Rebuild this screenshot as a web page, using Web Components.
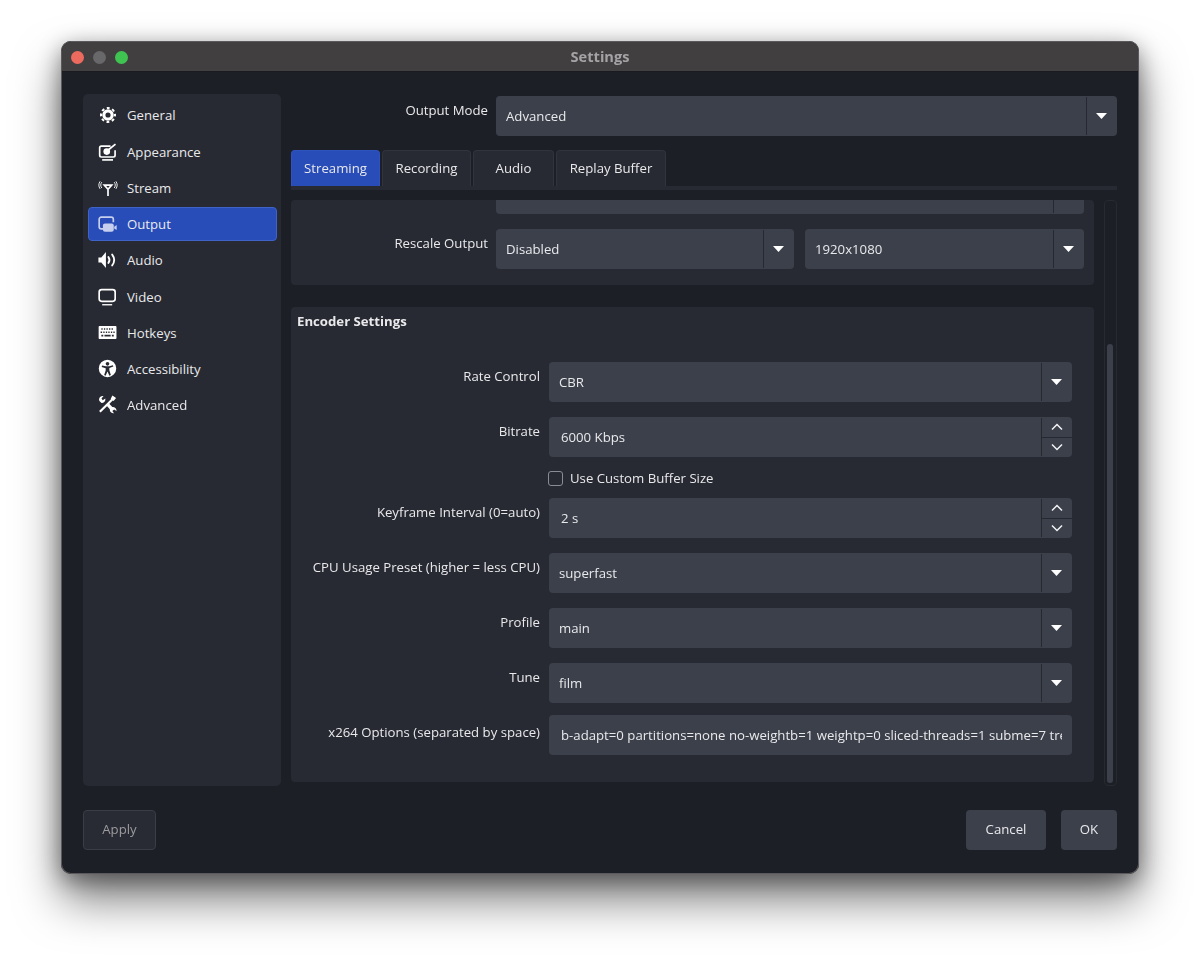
<!DOCTYPE html>
<html>
<head>
<meta charset="utf-8">
<title>Settings</title>
<style>
    html, body { margin: 0; background: #fff; }
    body { box-sizing: border-box; height: 955px; padding: 41px 0 0 61px; overflow: hidden; font-family: "Open Sans", sans-serif; font-size: 13.2px; color: #e9e9ec; }
</style>
</head>
<body>
<settings-window>
    <side-bar slot="side">
        <nav-item icon="general">General</nav-item>
        <nav-item icon="appearance">Appearance</nav-item>
        <nav-item icon="stream">Stream</nav-item>
        <nav-item icon="output" selected>Output</nav-item>
        <nav-item icon="audio">Audio</nav-item>
        <nav-item icon="video">Video</nav-item>
        <nav-item icon="hotkeys">Hotkeys</nav-item>
        <nav-item icon="accessibility">Accessibility</nav-item>
        <nav-item icon="advanced">Advanced</nav-item>
    </side-bar>

    <form-row slot="main" style="--label-width:197px;--mt:2px;--col-gap:8px">
        <span slot="label">Output Mode</span>
        <combo-box>Advanced</combo-box>
    </form-row>
    <tab-bar slot="main">
        <tab-item style="width:89px" active>Streaming</tab-item>
        <tab-item style="width:89px">Recording</tab-item>
        <tab-item style="width:81px">Audio</tab-item>
        <tab-item style="width:110px">Replay Buffer</tab-item>
    </tab-bar>
    <scroll-area slot="main">
        <group-panel style="--pad-bottom:16px">
            <form-row style="--label-width:191px;--mt:0;--col-gap:8px;height:14px">
                <combo-box cut style="--h:14px"></combo-box>
            </form-row>
            <form-row style="--label-width:191px;--col-gap:8px">
                <span slot="label">Rescale Output</span>
                <field-pair>
                    <combo-box style="width:298px">Disabled</combo-box>
                    <combo-box style="width:279px">1920x1080</combo-box>
                </field-pair>
            </form-row>
        </group-panel>
        <group-panel title="Encoder Settings" style="margin-top:22px;--pad-bottom:27px;--pad-right:22px">
            <form-row style="--mt:32px">
                <span slot="label">Rate Control</span>
                <combo-box>CBR</combo-box>
            </form-row>
            <form-row>
                <span slot="label">Bitrate</span>
                <spin-box>6000 Kbps</spin-box>
            </form-row>
            <form-row style="--mt:11px">
                <check-box>Use Custom Buffer Size</check-box>
            </form-row>
            <form-row style="--mt:10px">
                <span slot="label">Keyframe Interval (0=auto)</span>
                <spin-box>2 s</spin-box>
            </form-row>
            <form-row>
                <span slot="label">CPU Usage Preset (higher = less CPU)</span>
                <combo-box>superfast</combo-box>
            </form-row>
            <form-row>
                <span slot="label">Profile</span>
                <combo-box>main</combo-box>
            </form-row>
            <form-row>
                <span slot="label">Tune</span>
                <combo-box>film</combo-box>
            </form-row>
            <form-row style="--mt:12px;--label-top:8px">
                <span slot="label">x264 Options (separated by space)</span>
                <text-field>b-adapt=0 partitions=none no-weightb=1 weightp=0 sliced-threads=1 subme=7 trellis=1</text-field>
            </form-row>
        </group-panel>
    </scroll-area>

    <push-button slot="left" disabled style="width:73px">Apply</push-button>
    <push-button slot="right" style="width:80px">Cancel</push-button>
    <push-button slot="right" style="width:56px">OK</push-button>
</settings-window>

<script>
const ICONS = {
    general: `<circle cx="12" cy="12" r="5" fill="none" stroke="currentColor" stroke-width="3.800"/>
        <circle cx="12" cy="12" r="8.400" fill="none" stroke="currentColor" stroke-width="2.400" stroke-dasharray="3.400 3.200" stroke-dashoffset="1.700"/>`,
    appearance: `<path d="M20.500 10v6a2 2 0 0 1-2 2H4a2 2 0 0 1-2-2V7a2 2 0 0 1 2-2h11" fill="none" stroke="currentColor" stroke-width="2"/>
        <circle cx="10.500" cy="11.500" r="4" fill="currentColor"/>
        <path d="M13 9l8-6.500" stroke="currentColor" stroke-width="2" fill="none"/>
        <path d="M5 21.500h13" stroke="currentColor" stroke-width="2"/>`,
    stream: `<path d="M7.500 8.500h9L12 13.500zM12 12v9.500" fill="none" stroke="currentColor" stroke-width="2"/>
        <path d="M4.500 5c-1.600 2.200-1.600 4.800 0 7M2.500 4c-2 3-2 6 0 9M19.500 5c1.600 2.200 1.600 4.800 0 7M21.500 4c2 3 2 6 0 9" fill="none" stroke="currentColor" stroke-width="1.100"/>`,
    output: `<g transform="translate(-.6 .8)">
        <path d="M7 17H4.500A2.500 2.500 0 0 1 2 14.500V5.500A2.500 2.500 0 0 1 4.500 3h12A2.500 2.500 0 0 1 19 5.500V9" fill="none" stroke="currentColor" stroke-width="2"/>
        <rect x="6.500" y="10.500" width="13" height="10" rx="2.500" fill="currentColor"/>
        <path d="M20 14.500l3-2v6l-3-2z" fill="currentColor"/></g>`,
    audio: `<path d="M.5 9H4l5.500-6.500v19L4 15H.5z" fill="currentColor"/>
        <path d="M12.500 8.500c1.500 2 1.500 5 0 7M17 5.500c3 4 3 9 0 13" fill="none" stroke="currentColor" stroke-width="2.200" stroke-linecap="round"/>`,
    video: `<rect x="1.400" y="3.200" width="19.200" height="14" rx="3" fill="none" stroke="currentColor" stroke-width="2"/>
        <path d="M5 21.300h12" stroke="currentColor" stroke-width="1.600"/>`,
    hotkeys: `<g transform="translate(.3 -1.900) scale(.93 1.110)"><path fill-rule="evenodd" fill="currentColor" d="M1.500 5h21a1 1 0 0 1 1 1v12a1 1 0 0 1-1 1h-21a1 1 0 0 1-1-1V6a1 1 0 0 1 1-1zM4 7.500v1.600h1.700V7.500zM7.300 7.500v1.600H9V7.500zM10.600 7.500v1.600h1.700V7.500zM13.900 7.500v1.600h1.700V7.500zM17.200 7.500v1.600h1.700V7.500zM3 11v1.600h2V11zM6.500 11v1.600h1.700V11zM9.800 11v1.600h1.700V11zM13 11v1.600h1.700V11zM16.300 11v1.600h1.700V11zM19.500 11v1.600h1.700V11zM4 14.500v1.800h2.500v-1.800zM8 14.500v1.800h8v-1.800zM17.500 14.500v1.800h2.500v-1.800z"/></g>`,
    accessibility: `<g transform="translate(-.6 -.7)"><path fill-rule="evenodd" fill="currentColor" d="M12 1.500a10.500 10.500 0 1 1 0 21 10.500 10.500 0 0 1 0-21zM12 4.300a2.200 2.200 0 1 0 0 4.400 2.200 2.200 0 0 0 0-4.400zM5.500 8.500l-.5 1.700 4.800 1.600v2.700L8 20l1.700.7 2.300-5 2.300 5 1.700-.7-1.800-5.900v-2.700l4.800-1.600-.5-1.700-4.500 1.200h-4z"/></g>`,
    advanced: `<g transform="translate(-.8 -.8)">
        <path d="M3 21l9.500-9.500M12.500 11.500l8-8" stroke="currentColor" stroke-width="2.600" fill="none"/>
        <path d="M18 1.500l4.500 3-3 3.500-3.500-2.500z" fill="currentColor"/>
        <path d="M2 6.500a4.500 4.500 0 0 1 5.500-4.500L5 5l1.500 2 3-2a4.500 4.500 0 0 1-4.500 5.500L2.500 8zM11 13.500l3-2.500 4 4.200a4.500 4.500 0 0 1 5 4.800l-2.800-1.800-2.200 1.800 2 2.800a4.500 4.500 0 0 1-5-5z" fill="currentColor"/></g>`
};

const COLORS = `
    --field: #3c404b;
    --panel: #272a32;
    --window: #1d1f26;
    --divider: #272932;
`;

class SettingsWindow extends HTMLElement {
    constructor() {
        super();
        this.attachShadow({ mode: 'open' }).innerHTML = `
            <style>
                :host {
                    ${COLORS}
                    display: flex;
                    flex-direction: column;
                    box-sizing: border-box;
                    width: 1078px;
                    height: 833px;
                    background: var(--window);
                    border-radius: 10px;
                    box-shadow: inset 0 0 0 1px #5b595b, 0 26px 46px rgba(0,0,0,0.5), 0 6px 22px rgba(0,0,0,0.4);
                }
                .title {
                    flex: none;
                    display: flex;
                    align-items: center;
                    justify-content: center;
                    position: relative;
                    box-sizing: border-box;
                    height: 30px;
                    padding-bottom: 2px;
                    margin: 1px 1px 0;
                    background: #423f41;
                    border-bottom: 1px solid #1a1b20;
                    border-radius: 9px 9px 0 0;
                    font-weight: 700;
                    font-size: 14.600px;
                    color: #a5a3a5;
                    filter: blur(0.3px);
                }
                .lights { position: absolute; left: 8.500px; top: 8.500px; display: flex; gap: 9px; }
                .lights i { width: 13px; height: 13px; border-radius: 50%; }
                .body {
                    flex: 1;
                    min-height: 0;
                    display: flex;
                    gap: 10px;
                    padding: 22px 22px 0;
                    filter: blur(0.3px);
                }
                .main { flex: 1; min-width: 0; display: flex; flex-direction: column; }
                .foot {
                    flex: none;
                    display: flex;
                    justify-content: space-between;
                    padding: 24px 22px 24px;
                    filter: blur(0.3px);
                }
                .right { display: flex; gap: 15px; }
            </style>
            <div class="title">
                <div class="lights">
                    <i style="background:#ed6a5f"></i>
                    <i style="background:#68676a"></i>
                    <i style="background:#3fc451"></i>
                </div>
                Settings
            </div>
            <div class="body">
                <slot name="side"></slot>
                <div class="main"><slot name="main"></slot></div>
            </div>
            <div class="foot">
                <div><slot name="left"></slot></div>
                <div class="right"><slot name="right"></slot></div>
            </div>
        `;
    }
}

class SideBar extends HTMLElement {
    constructor() {
        super();
        this.attachShadow({ mode: 'open' }).innerHTML = `
            <style>
                :host {
                    flex: none;
                    display: flex;
                    flex-direction: column;
                    gap: 2.250px;
                    box-sizing: border-box;
                    width: 198px;
                    padding: 4.250px 4px 0 5px;
                    background: var(--panel);
                    border-radius: 5px;
                }
            </style>
            <slot></slot>
        `;
    }
}

class NavItem extends HTMLElement {
    connectedCallback() {
        const name = this.getAttribute('icon');
        this.attachShadow({ mode: 'open' }).innerHTML = `
            <style>
                :host {
                    display: flex;
                    align-items: center;
                    gap: 9px;
                    box-sizing: border-box;
                    height: 34px;
                    padding-left: 10px;
                    border: 1px solid transparent;
                    border-radius: 4px;
                }
                :host([selected]) {
                    background: #284cb8;
                    border-color: #3f63c9;
                }
                :host([selected]) svg { color: #c6cfee; }
                svg { flex: none; width: 20px; height: 20px; color: #fff; margin-left: -1px; }
            </style>
            <svg viewBox="0 0 24 24">${ICONS[name]}</svg>
            <span><slot></slot></span>
        `;
    }
}

class FormRow extends HTMLElement {
    constructor() {
        super();
        this.attachShadow({ mode: 'open' }).innerHTML = `
            <style>
                :host {
                    display: grid;
                    grid-template-columns: var(--label-width, 243px) minmax(0, 1fr);
                    column-gap: var(--col-gap, 9px);
                    margin-top: var(--mt, 15px);
                }
                .label { text-align: right; line-height: 18px; padding-top: var(--label-top, 5px); white-space: nowrap; }
            </style>
            <div class="label"><slot name="label"></slot></div>
            <div><slot></slot></div>
        `;
    }
}

class FieldPair extends HTMLElement {
    constructor() {
        super();
        this.attachShadow({ mode: 'open' }).innerHTML = `
            <style>
                :host { display: flex; gap: 11px; }
            </style>
            <slot></slot>
        `;
    }
}

class ComboBox extends HTMLElement {
    connectedCallback() {
        const cut = this.hasAttribute('cut');
        this.attachShadow({ mode: 'open' }).innerHTML = `
            <style>
                :host {
                    display: flex;
                    box-sizing: border-box;
                    height: var(--h, 40px);
                    background: var(--field);
                    border-radius: ${cut ? '0 0 4px 4px' : '4px'};
                }
                .text { flex: 1; min-width: 0; padding-left: 10px; line-height: 40px; white-space: nowrap; overflow: hidden; }
                .btn {
                    flex: none;
                    display: flex;
                    align-items: center;
                    justify-content: center;
                    width: 31px;
                    padding-right: 1px;
                    border-left: 1px solid var(--divider);
                    box-sizing: border-box;
                    margin: ${cut ? '0 0 1px' : '1px 0'};
                }
                svg { width: 11px; height: 6px; color: #fff; }
            </style>
            <div class="text"><slot></slot></div>
            <div class="btn">${cut ? '' : '<svg viewBox="0 0 11 6"><path d="M0 0h11L5.500 6z" fill="currentColor"/></svg>'}</div>
        `;
    }
}

class SpinBox extends HTMLElement {
    constructor() {
        super();
        this.attachShadow({ mode: 'open' }).innerHTML = `
            <style>
                :host {
                    display: flex;
                    box-sizing: border-box;
                    height: 40px;
                    background: var(--field);
                    border-radius: 4px;
                }
                .text { flex: 1; padding-left: 12px; line-height: 40px; white-space: nowrap; }
                .btns {
                    flex: none;
                    display: flex;
                    flex-direction: column;
                    width: 31px;
                    box-sizing: border-box;
                    margin: 1px 0;
                    border-left: 1px solid var(--divider);
                }
                .btns div { flex: 1; display: flex; align-items: center; justify-content: center; padding-right: 1px; }
                .btns div:first-child { border-bottom: 1px solid var(--divider); }
                svg { width: 12px; height: 8px; fill: none; stroke: #f2f2f4; stroke-width: 1.500; }
            </style>
            <div class="text"><slot></slot></div>
            <div class="btns">
                <div><svg viewBox="0 0 12 8"><path d="M1 6.500L6 1.500l5 5"/></svg></div>
                <div><svg viewBox="0 0 12 8"><path d="M1 1.500l5 5 5-5"/></svg></div>
            </div>
        `;
    }
}

class TextField extends HTMLElement {
    constructor() {
        super();
        this.attachShadow({ mode: 'open' }).innerHTML = `
            <style>
                :host {
                    display: block;
                    box-sizing: border-box;
                    height: 40px;
                    padding: 0 10px 0 12px;
                    background: var(--field);
                    border-radius: 4px;
                }
                div { line-height: 40px; white-space: nowrap; overflow: hidden; }
            </style>
            <div><slot></slot></div>
        `;
    }
}

class CheckBox extends HTMLElement {
    constructor() {
        super();
        this.attachShadow({ mode: 'open' }).innerHTML = `
            <style>
                :host { display: flex; align-items: center; gap: 7px; height: 20px; margin-left: -1px; }
                i { flex: none; box-sizing: border-box; width: 15px; height: 15px; border: 1px solid #8a8c94; border-radius: 3px; }
            </style>
            <i></i><slot></slot>
        `;
    }
}

class TabBar extends HTMLElement {
    constructor() {
        super();
        this.attachShadow({ mode: 'open' }).innerHTML = `
            <style>
                :host {
                    flex: none;
                    display: flex;
                    gap: 2px;
                    height: 36px;
                    margin-top: 14px;
                    border-bottom: 4px solid var(--panel);
                }
            </style>
            <slot></slot>
        `;
    }
}

class TabItem extends HTMLElement {
    constructor() {
        super();
        this.attachShadow({ mode: 'open' }).innerHTML = `
            <style>
                :host {
                    display: flex;
                    align-items: center;
                    justify-content: center;
                    box-sizing: border-box;
                    padding-bottom: 2px;
                    background: var(--panel);
                    border: 1px solid #31343d;
                    border-bottom: 0;
                    border-radius: 4px 4px 0 0;
                }
                :host([active]) { background: #284cb8; border-color: #2f53bd; }
            </style>
            <slot></slot>
        `;
    }
}

class ScrollArea extends HTMLElement {
    constructor() {
        super();
        this.attachShadow({ mode: 'open' }).innerHTML = `
            <style>
                :host {
                    flex: 1;
                    min-height: 0;
                    display: flex;
                    gap: 10px;
                    margin-top: 10px;
                }
                .content { flex: 1; min-width: 0; }
                .track {
                    flex: none;
                    box-sizing: border-box;
                    width: 13px;
                    padding: 143px 2px 2px;
                    border: 1px solid #272a32;
                    border-radius: 4px;
                }
                .thumb { height: 100%; background: var(--field); border-radius: 3px; width: 6px; }
            </style>
            <div class="content"><slot></slot></div>
            <div class="track"><div class="thumb"></div></div>
        `;
    }
}

class GroupPanel extends HTMLElement {
    connectedCallback() {
        const title = this.getAttribute('title');
        this.attachShadow({ mode: 'open' }).innerHTML = `
            <style>
                :host {
                    display: block;
                    padding: 0 var(--pad-right, 10px) var(--pad-bottom, 16px) 6px;
                    background: var(--panel);
                    border-radius: 4px;
                }
                .title { font-weight: 700; line-height: 18px; padding-top: 5px; }
            </style>
            ${title ? `<div class="title">${title}</div>` : ''}
            <slot></slot>
        `;
    }
}

class PushButton extends HTMLElement {
    constructor() {
        super();
        this.attachShadow({ mode: 'open' }).innerHTML = `
            <style>
                :host {
                    display: flex;
                    align-items: center;
                    justify-content: center;
                    box-sizing: border-box;
                    height: 40px;
                    padding-bottom: 2px;
                    background: var(--field);
                    border-radius: 4px;
                }
                :host([disabled]) {
                    background: #292b34;
                    border: 1px solid #3a3c46;
                    color: #9b9b9e;
                }
            </style>
            <slot></slot>
        `;
    }
}

customElements.define('settings-window', SettingsWindow);
customElements.define('side-bar', SideBar);
customElements.define('nav-item', NavItem);
customElements.define('form-row', FormRow);
customElements.define('field-pair', FieldPair);
customElements.define('combo-box', ComboBox);
customElements.define('spin-box', SpinBox);
customElements.define('text-field', TextField);
customElements.define('check-box', CheckBox);
customElements.define('tab-bar', TabBar);
customElements.define('tab-item', TabItem);
customElements.define('scroll-area', ScrollArea);
customElements.define('group-panel', GroupPanel);
customElements.define('push-button', PushButton);
</script>
</body>
</html>
